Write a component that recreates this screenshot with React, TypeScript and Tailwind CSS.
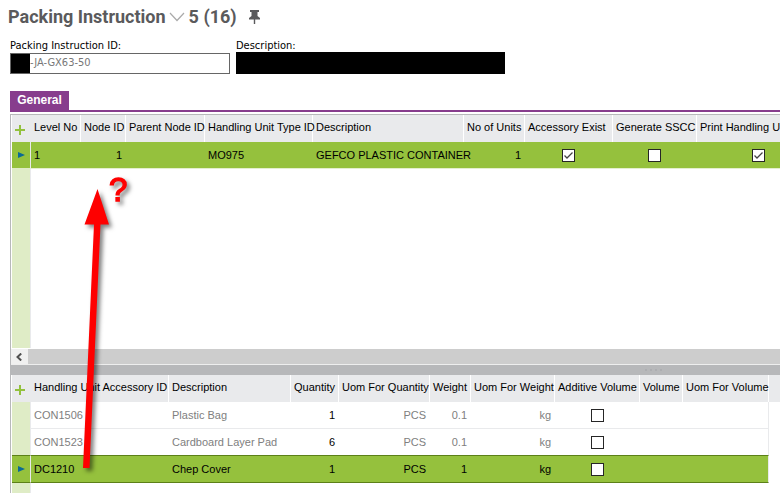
import type { ReactNode } from "react";

type Column = { label: string; width: number };

const unitColumns: Column[] = [
  { label: "Level No", width: 50 },
  { label: "Node ID", width: 45 },
  { label: "Parent Node ID", width: 79 },
  { label: "Handling Unit Type ID", width: 108 },
  { label: "Description", width: 151 },
  { label: "No of Units", width: 61 },
  { label: "Accessory Exist", width: 88 },
  { label: "Generate SSCC", width: 84 },
  { label: "Print Handling Unit Label", width: 124 },
];

const accessoryColumns: Column[] = [
  { label: "Handling Unit Accessory ID", width: 138 },
  { label: "Description", width: 122 },
  { label: "Quantity", width: 48 },
  { label: "Uom For Quantity", width: 91 },
  { label: "Weight", width: 41 },
  { label: "Uom For Weight", width: 84 },
  { label: "Additive Volume", width: 85 },
  { label: "Volume", width: 43 },
  { label: "Uom For Volume", width: 86 },
];

const accessories = [
  { id: "CON1506", name: "Plastic Bag", quantity: 1, uom: "PCS", weight: "0.1", weightUom: "kg", selected: false },
  { id: "CON1523", name: "Cardboard Layer Pad", quantity: 6, uom: "PCS", weight: "0.1", weightUom: "kg", selected: false },
  { id: "DC1210", name: "Chep Cover", quantity: 1, uom: "PCS", weight: "1", weightUom: "kg", selected: true },
];

function Tick({ label, checked = false }: { label: string; checked?: boolean }) {
  return (
    <span className="mx-auto grid size-[13px] place-items-center">
      <input
        type="checkbox"
        aria-label={label}
        defaultChecked={checked}
        className="peer col-start-1 row-start-1 size-[13px] appearance-none border border-[#262626] bg-white"
      />
      <svg
        viewBox="0 0 13 13"
        className="pointer-events-none invisible col-start-1 row-start-1 size-[13px] peer-checked:visible"
        fill="none"
        stroke="#444"
        strokeWidth="1.3"
        aria-hidden="true"
      >
        <path d="M2.5 6.5 5 9 10.5 3.5" />
      </svg>
    </span>
  );
}

function Marker() {
  return (
    <svg viewBox="0 0 7 6" className="ml-[6px] h-[6px] w-[7px]" aria-hidden="true">
      <path d="M0 0 7 3 0 6z" fill="#0b6a94" />
    </svg>
  );
}

function Grid({ name, columns, children }: { name: string; columns: Column[]; children: ReactNode }) {
  return (
    <table aria-label={name} className="w-full table-fixed border-separate border-spacing-0 whitespace-nowrap">
      <colgroup>
        <col className="w-[19px]" />
        {columns.map((c) => (
          <col key={c.label} style={{ width: c.width }} />
        ))}
        <col />
      </colgroup>
      <thead>
        <tr className="h-[27px] bg-[#e9eaec]">
          <th className="p-0">
            <button type="button" aria-label="Add row" className="block pt-1 pl-[3px]">
              <svg viewBox="0 0 11 11" className="size-[11px]" aria-hidden="true">
                <path d="M5 0v10M0 5h10" stroke="#93c13d" strokeWidth="2" />
              </svg>
            </button>
          </th>
          {columns.map((c) => (
            <th key={c.label} scope="col" className="border-r border-white p-0 pb-[2px] pl-[3px] text-left font-normal">
              {c.label}
            </th>
          ))}
          <th className="p-0" />
        </tr>
      </thead>
      <tbody>{children}</tbody>
    </table>
  );
}

export default function App() {
  return (
    <main className="relative min-h-screen overflow-hidden bg-white font-['Liberation_Sans',Arial,sans-serif] text-[11px] leading-[13px] text-black">
      <header className="flex h-[38px] items-center pb-1 pl-2 font-['Roboto',sans-serif] text-[18px] leading-6 font-bold text-[#5a5a5c]">
        <h1>Packing Instruction</h1>
        <button type="button" aria-label="Choose record" className="mr-1 ml-[3px]">
          <svg viewBox="0 0 16 10" className="h-[10px] w-4" fill="none" stroke="#aaa" strokeWidth="1.2" aria-hidden="true">
            <path d="M1 1 8 8.5 15 1" />
          </svg>
        </button>
        <span>5 (16)</span>
        <button type="button" aria-label="Pin" className="ml-3">
          <svg viewBox="0 0 11 14" className="h-[14px] w-[11px]" fill="#5a5a5c" aria-hidden="true">
            <path d="M1 0h9v2H8.500v4l2.500 2v1.500H6.200V14H4.800V9.500H0V8l2.500-2V2H1z" />
          </svg>
        </button>
      </header>

      <form className="flex gap-[6px] pl-[10px] font-['DejaVu_Sans_Condensed','DejaVu_Sans',sans-serif]">
        <div className="w-[220px]">
          <label htmlFor="instruction" className="block h-[15px] leading-[15px] whitespace-nowrap">
            Packing Instruction ID:
          </label>
          <div className="flex h-[21px] border border-[#666] bg-white">
            <span className="w-[19px] bg-black" />
            <input id="instruction" defaultValue="-JA-GX63-50" className="min-w-0 flex-1 pb-[3px] text-[#777] outline-none" />
          </div>
        </div>
        <div className="w-[269px]">
          <label htmlFor="description" className="block h-[14px] leading-[15px]">
            Description:
          </label>
          <input id="description" className="block h-[22px] w-full bg-black text-black outline-none" />
        </div>
      </form>

      <div role="tablist" className="mt-[17px] ml-[10px] flex border-b-2 border-[#873d8d]">
        <button
          type="button"
          role="tab"
          aria-selected="true"
          className="h-[19px] w-[59px] bg-[#873d8d] text-center text-[12px] font-bold text-white"
        >
          General
        </button>
      </div>

      <div className="mt-[2px] ml-[10px] border-t border-l border-[#b7b8ba]">
        <section className="flex h-[233px] flex-col overflow-hidden pl-px">
          <div className="w-[900px]">
            <Grid name="Handling units" columns={unitColumns}>
              <tr className="h-[27px] bg-[#95c13d]">
                <td className="border-r border-b border-r-[#e9eaec] border-b-[#dfecc6] p-0"><Marker /></td>
                <td className="border-b border-[#e4efcf] pl-[3px]">1</td>
                <td className="border-b border-[#e4efcf] pr-1 text-right">1</td>
                <td className="border-b border-[#e4efcf]" />
                <td className="border-b border-[#e4efcf] pl-[3px]">MO975</td>
                <td className="border-b border-[#e4efcf] pl-[3px]">GEFCO PLASTIC CONTAINER</td>
                <td className="border-b border-[#e4efcf] pr-1 text-right">1</td>
                <td className="border-b border-[#e4efcf] p-0 pr-[2px]"><Tick label="Accessory exist" checked /></td>
                <td className="border-b border-[#e4efcf] p-0 pr-[2px]"><Tick label="Generate SSCC" /></td>
                <td className="border-b border-[#e4efcf] p-0 pr-[2px]"><Tick label="Print handling unit label" checked /></td>
                <td className="border-b border-[#e4efcf]" />
              </tr>
            </Grid>
          </div>
          <div className="w-[19px] flex-1 border-r border-[#e9eaec] bg-[#dfecc6]" />
        </section>

        <div className="mt-px flex h-[15px] bg-[#cdcdcd]">
          <button type="button" aria-label="Scroll left" className="flex w-[17px] items-center bg-[#f0f0f0] pl-[5px]">
            <svg viewBox="0 0 6 8" className="h-2 w-[6px]" fill="none" stroke="#505050" strokeWidth="2" aria-hidden="true">
              <path d="M5.200 0.500 1.500 4 5.200 7.500" />
            </svg>
          </button>
        </div>
        <div className="flex h-[11px] justify-center gap-[3px] border-t border-[#eee] bg-[#b7b8ba] pt-1 pl-[515px]">
          <span className="size-[2px] bg-[#adaeb1]" />
          <span className="size-[2px] bg-[#adaeb1]" />
          <span className="size-[2px] bg-[#adaeb1]" />
          <span className="size-[2px] bg-[#adaeb1]" />
        </div>

        <section className="flex h-[118px] flex-col overflow-hidden pl-px">
          <Grid name="Accessories" columns={accessoryColumns}>
            {accessories.map((a) => {
              const cell = a.selected
                ? "border-y border-[#5c8018] bg-[#95c13d] "
                : "border-b border-[#e9eaec] text-[#808080] ";
              return (
                <tr key={a.id} className={a.selected ? "h-[28px]" : "h-[27px] even:h-[26px] even:[&>td]:border-b-0"}>
                  <td className={a.selected ? "border-y border-r border-y-[#5c8018] border-r-[#e9eaec] bg-[#95c13d] p-0" : "border-r border-[#e9eaec] bg-[#dfecc6] p-0"}>
                    {a.selected && <Marker />}
                  </td>
                  <td className={cell + "pl-[3px]"}>{a.id}</td>
                  <td className={cell + "pl-[3px]"}>{a.name}</td>
                  <td className={cell + "pr-1 text-right"}><span className="text-black">{a.quantity}</span></td>
                  <td className={cell + "pr-1 text-right"}>{a.uom}</td>
                  <td className={cell + "pr-1 text-right"}>{a.weight}</td>
                  <td className={cell + "pr-1 text-right"}>{a.weightUom}</td>
                  <td className={cell + "p-0"}><Tick label={`Additive volume for ${a.id}`} /></td>
                  <td className={cell} />
                  <td className={cell + "border-r border-r-[#e9eaec]"} />
                  <td />
                </tr>
              );
            })}
          </Grid>
          <div className="w-[19px] flex-1 border-r border-[#e9eaec] bg-[#dfecc6]" />
        </section>
      </div>

      <svg
        viewBox="0 0 70 310"
        className="pointer-events-none absolute top-[170px] left-[75px] h-[310px] w-[70px] drop-shadow-[3px_3px_2px_rgba(0,0,0,0.5)]"
        role="img"
        aria-label="Arrow from DC1210 to Node ID"
      >
        <path d="M22.500 19 34 54.500H25.500L14.500 298H8L19 54.500H9.500z" fill="#fe0000" />
        <text x="34" y="31" fill="#fe0000" stroke="#fe0000" strokeWidth="1.4" fontSize="33" fontFamily="Liberation Sans, Arial, sans-serif">?</text>
      </svg>
    </main>
  );
}
